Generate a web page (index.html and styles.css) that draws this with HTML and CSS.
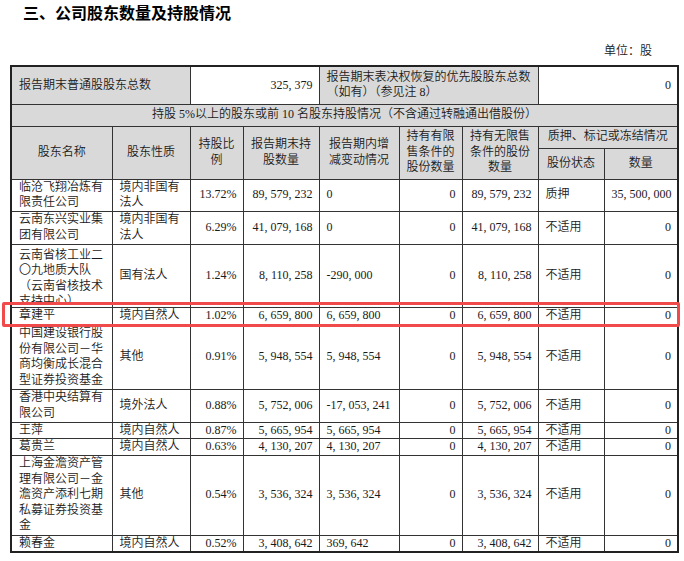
FILE: index.html
```html
<!DOCTYPE html>
<html lang="zh-CN">
<head>
<meta charset="utf-8">
<title>公司股东数量及持股情况</title>
<link rel="stylesheet" href="styles.css">
</head>
<body>
<div class="page">
  <h1 class="title">三、公司股东数量及持股情况</h1>
  <div class="unit">单位：股</div>
  <table class="holders">
    <colgroup>
      <col class="c1"><col class="c2"><col class="c3"><col class="c4"><col class="c5"><col class="c6"><col class="c7"><col class="c8"><col class="c9">
    </colgroup>
    <tr class="r-sum">
      <td class="lbl l" colspan="2">报告期末普通股股东总数</td>
      <td class="r" colspan="2">325, 379</td>
      <td class="lbl l tight" colspan="3">报告期末表决权恢复的优先股股东总数<br>（如有）（参见注 8）</td>
      <td class="r" colspan="2">0</td>
    </tr>
    <tr class="r-cap">
      <td class="lbl c" colspan="9">持股 5%以上的股东或前 10 名股东持股情况（不含通过转融通出借股份）</td>
    </tr>
    <tr class="r-ha">
      <td class="lbl c" rowspan="2">股东名称</td>
      <td class="lbl c" rowspan="2">股东性质</td>
      <td class="lbl c" rowspan="2">持股比<br>例</td>
      <td class="lbl c" rowspan="2">报告期末持<br>股数量</td>
      <td class="lbl c" rowspan="2">报告期内增<br>减变动情况</td>
      <td class="lbl c" rowspan="2">持有有限<br>售条件的<br>股份数量</td>
      <td class="lbl c" rowspan="2">持有无限售<br>条件的股份<br>数量</td>
      <td class="lbl c" colspan="2">质押、标记或冻结情况</td>
    </tr>
    <tr class="r-hb">
      <td class="lbl c">股份状态</td>
      <td class="lbl c">数量</td>
    </tr>
    <tr class="d1">
      <td class="l">临沧飞翔冶炼有限责任公司</td><td class="l">境内非国有法人</td><td class="r">13.72%</td><td class="r">89, 579, 232</td><td class="l">0</td><td class="r">0</td><td class="r">89, 579, 232</td><td class="l">质押</td><td class="r">35, 500, 000</td>
    </tr>
    <tr class="d2">
      <td class="l">云南东兴实业集团有限公司</td><td class="l">境内非国有法人</td><td class="r">6.29%</td><td class="r">41, 079, 168</td><td class="l">0</td><td class="r">0</td><td class="r">41, 079, 168</td><td class="l">不适用</td><td class="r">0</td>
    </tr>
    <tr class="d3">
      <td class="l top"><div class="clip">云南省核工业二〇九地质大队（云南省核技术支持中心）</div></td><td class="l">国有法人</td><td class="r">1.24%</td><td class="r">8, 110, 258</td><td class="l">-290, 000</td><td class="r">0</td><td class="r">8, 110, 258</td><td class="l">不适用</td><td class="r">0</td>
    </tr>
    <tr class="d4">
      <td class="l">章建平</td><td class="l">境内自然人</td><td class="r">1.02%</td><td class="r">6, 659, 800</td><td class="l">6, 659, 800</td><td class="r">0</td><td class="r">6, 659, 800</td><td class="l">不适用</td><td class="r">0</td>
    </tr>
    <tr class="d5">
      <td class="l">中国建设银行股份有限公司－华商均衡成长混合型证券投资基金</td><td class="l">其他</td><td class="r">0.91%</td><td class="r">5, 948, 554</td><td class="l">5, 948, 554</td><td class="r">0</td><td class="r">5, 948, 554</td><td class="l">不适用</td><td class="r">0</td>
    </tr>
    <tr class="d6">
      <td class="l">香港中央结算有限公司</td><td class="l">境外法人</td><td class="r">0.88%</td><td class="r">5, 752, 006</td><td class="l">-17, 053, 241</td><td class="r">0</td><td class="r">5, 752, 006</td><td class="l">不适用</td><td class="r">0</td>
    </tr>
    <tr class="d7">
      <td class="l">王萍</td><td class="l">境内自然人</td><td class="r">0.87%</td><td class="r">5, 665, 954</td><td class="l">5, 665, 954</td><td class="r">0</td><td class="r">5, 665, 954</td><td class="l">不适用</td><td class="r">0</td>
    </tr>
    <tr class="d8">
      <td class="l">葛贵兰</td><td class="l">境内自然人</td><td class="r">0.63%</td><td class="r">4, 130, 207</td><td class="l">4, 130, 207</td><td class="r">0</td><td class="r">4, 130, 207</td><td class="l">不适用</td><td class="r">0</td>
    </tr>
    <tr class="d9">
      <td class="l">上海金澹资产管理有限公司－金澹资产添利七期私募证券投资基金</td><td class="l">其他</td><td class="r">0.54%</td><td class="r">3, 536, 324</td><td class="l">3, 536, 324</td><td class="r">0</td><td class="r">3, 536, 324</td><td class="l">不适用</td><td class="r">0</td>
    </tr>
    <tr class="d10">
      <td class="l">赖春金</td><td class="l">境内自然人</td><td class="r">0.52%</td><td class="r">3, 408, 642</td><td class="l">369, 642</td><td class="r">0</td><td class="r">3, 408, 642</td><td class="l">不适用</td><td class="r">0</td>
    </tr>
  </table>
  <div class="mark"></div>
</div>
</body>
</html>
```

FILE: styles.css
```css
* { box-sizing: border-box; }
html, body { margin: 0; padding: 0; background: #fff; }
body {
  font-family: "Liberation Serif", "Noto Sans CJK SC", serif;
  color: #1a1a1a;
}
.page {
  position: relative;
  width: 684px;
  height: 561px;
  overflow: hidden;
  padding: 2px 0 0 10px;
}
.title {
  margin: 0 0 0 13px;
  font-family: "Noto Sans CJK SC", sans-serif;
  font-weight: 700;
  font-size: 16px;
  line-height: 20px;
  color: #000;
}
.unit {
  margin-top: 21px;
  padding-right: 32px;
  text-align: right;
  font-size: 12px;
  line-height: 16px;
  font-weight: 350;
}
.holders {
  border-collapse: collapse;
  table-layout: fixed;
  width: 668px;
  margin-top: 6px;
  font-size: 12px;
  font-weight: 350;
  line-height: 15.5px;
  border: 2px solid #222;
}
.c1 { width: 101px; }
.c2 { width: 78px; }
.c3 { width: 53px; }
.c4 { width: 76px; }
.c5 { width: 80px; }
.c6 { width: 63px; }
.c7 { width: 76px; }
.c8 { width: 66px; }
.c9 { width: 74px; }
.holders td {
  border: 1px solid #333;
  padding: 0 7px;
  vertical-align: middle;
}
.holders td.lbl { background: #d9d9d9; }
.holders td.l { text-align: left; }
.holders td.r { text-align: right; white-space: nowrap; padding-right: 6px; }
.holders td.c { text-align: center; }
.holders td.tight { padding-right: 2px; }
.holders td.top { vertical-align: top; padding-top: 3px; }
.clip { max-height: 56px; overflow: hidden; }
.r-sum { height: 38px; }
.r-cap { height: 22px; }
.r-ha { height: 22px; }
.r-hb { height: 31px; }
.d1 { height: 31px; }
.d2 { height: 33px; }
.d3 { height: 63px; }
.d4 { height: 18px; }
.d5 { height: 64px; }
.d6 { height: 33px; }
.d7 { height: 16px; }
.d8 { height: 16px; }
.d9 { height: 80px; }
.d10 { height: 17px; }
.mark {
  position: absolute;
  left: 2px;
  top: 302px;
  width: 678px;
  height: 25px;
  border: 3.5px solid #f04a4a;
  border-radius: 2px;
  pointer-events: none;
}
```
